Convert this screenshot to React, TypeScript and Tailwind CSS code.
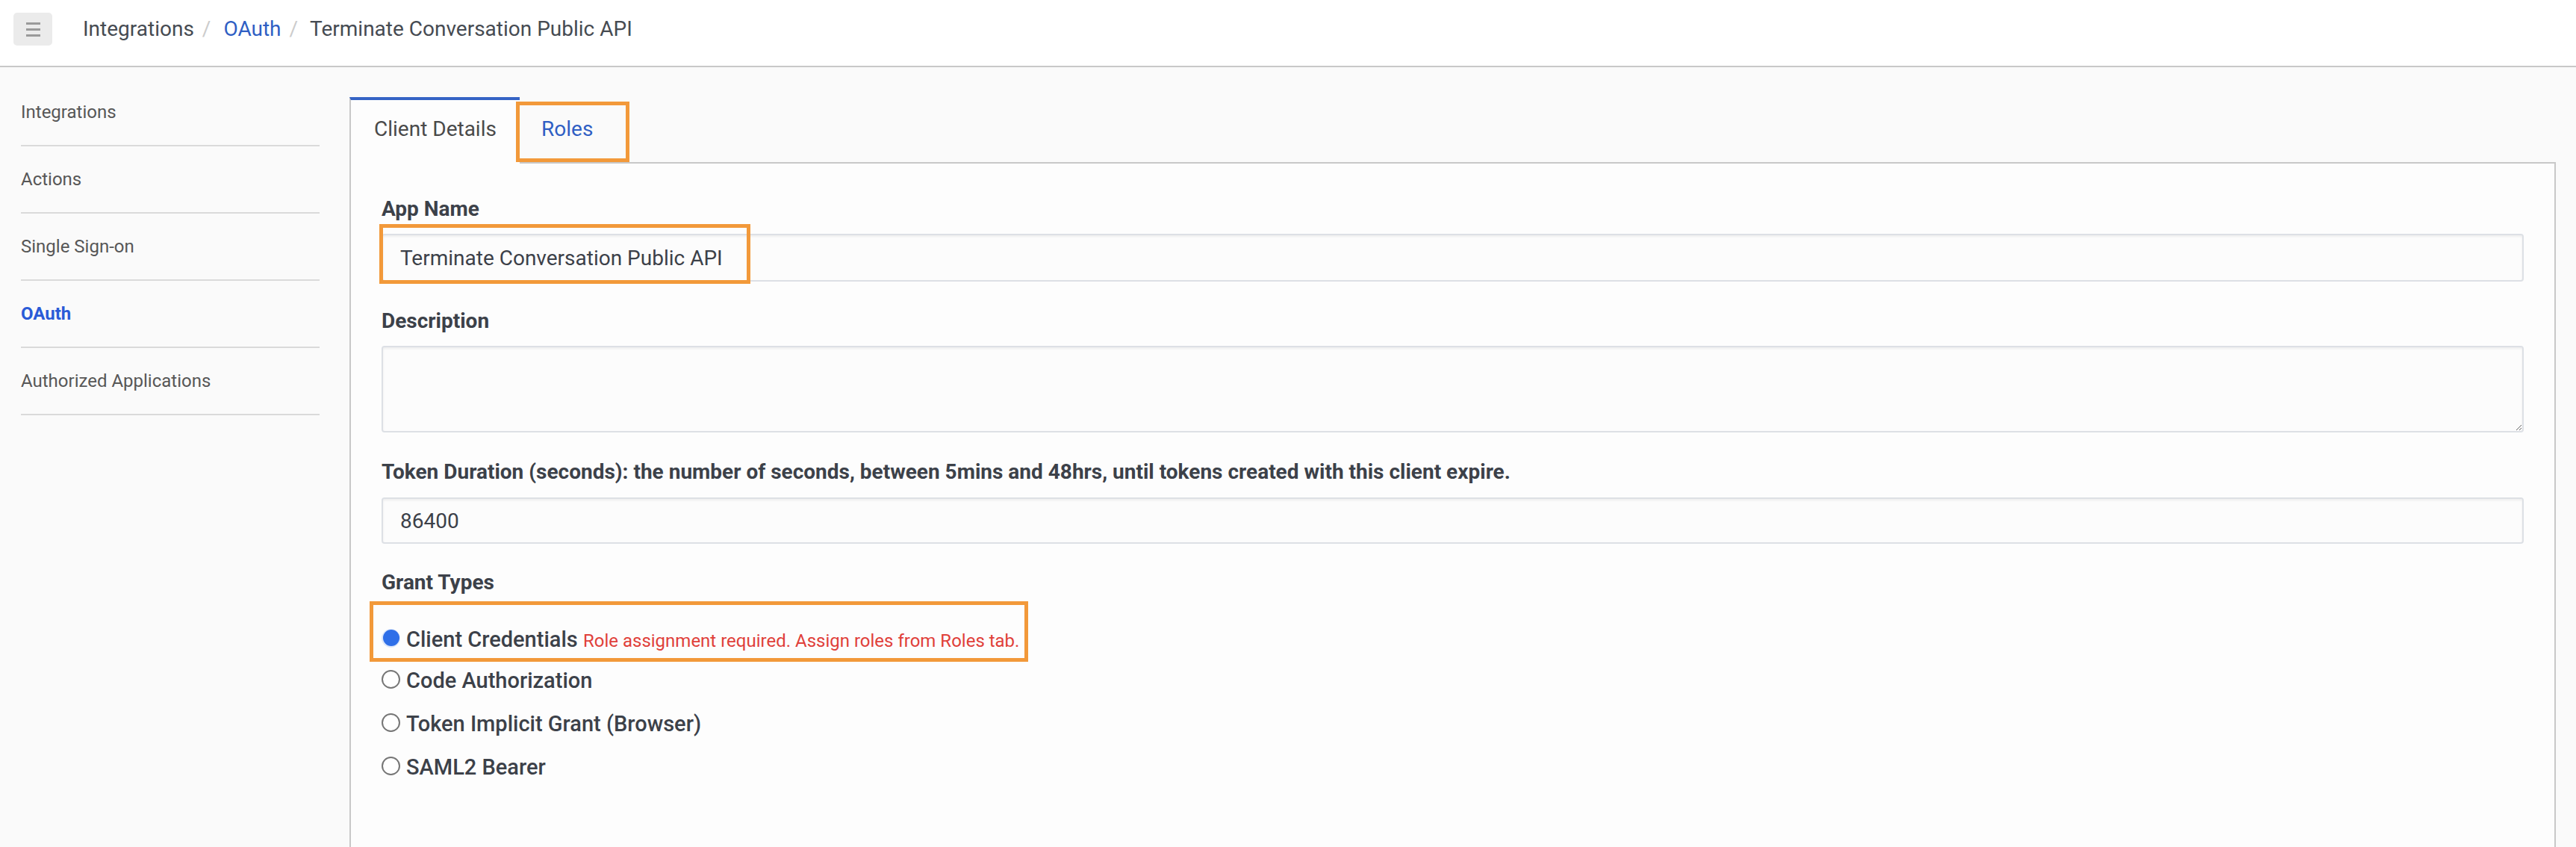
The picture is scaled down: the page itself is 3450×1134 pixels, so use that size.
const font = "font-['Roboto','Liberation_Sans',sans-serif]";

const sideItems = ["Integrations", "Actions", "Single Sign-on", "OAuth", "Authorized Applications"];

function Radio({ checked }: { checked?: boolean }) {
  if (checked) {
    return (
      <span className="mb-[6px] flex h-[25px] w-[25px] flex-none items-center justify-center rounded-full bg-[#dce7fb]">
        <span className="h-[22px] w-[22px] rounded-full bg-[#2f6fe8]" />
      </span>
    );
  }
  return <span className="mb-[6px] h-[25px] w-[25px] flex-none rounded-full border-2 border-[#767676] bg-white" />;
}

function GrantRow({ label, checked }: { label: string; checked?: boolean }) {
  return (
    <div className="flex h-[58px] items-center gap-[8px]">
      <Radio checked={checked} />
      <span className="text-[29px] font-medium text-[#3c4149]">{label}</span>
    </div>
  );
}

function Label({ children }: { children: React.ReactNode }) {
  return <div className="text-[28px] leading-[40px] font-bold text-[#3c4149]">{children}</div>;
}

export default function App() {
  return (
    <div className={`${font} flex h-[1134px] flex-col overflow-hidden bg-[#fafafa]`}>
      {/* top bar */}
      <header className="flex h-[90px] flex-none items-start border-b-2 border-[#c8c8c8] bg-white pl-[18px] pt-[17px]">
        <button className="flex h-[44px] w-[52px] flex-col items-center justify-center gap-[5px] rounded-[5px] bg-[#ebebeb]">
          <span className="h-[3px] w-[19px] bg-[#9a9a9a]" />
          <span className="h-[3px] w-[19px] bg-[#9a9a9a]" />
          <span className="h-[3px] w-[19px] bg-[#9a9a9a]" />
        </button>
        <nav className="ml-[41px] flex h-[44px] items-center text-[28px] text-[#464b52]">
          <span>Integrations</span>
          <span className="ml-[11px] mr-[17px] text-[#cccccc]">/</span>
          <span className="text-[#2f5fc4]">OAuth</span>
          <span className="ml-[11px] mr-[16px] text-[#cccccc]">/</span>
          <span>Terminate Conversation Public API</span>
        </nav>
      </header>

      <div className="flex flex-1 pr-[27px]">
        {/* sidebar */}
        <aside className="ml-[28px] mt-[16px] w-[400px] flex-none">
          {sideItems.map((item) => (
            <div
              key={item}
              className={`flex h-[90px] items-center border-b-2 border-[#dadada] text-[24px] ${
                item === "OAuth" ? "font-bold text-[#2a5bd7]" : "text-[#575757]"
              }`}
            >
              {item}
            </div>
          ))}
        </aside>

        {/* content */}
        <main className="ml-[40px] mt-[40px] flex flex-1 flex-col">
          <div className="flex items-end">
            <div className="relative z-10 -mb-[2px] h-[89px] w-[228px] border-l-2 border-t-4 border-l-[#c8c8c8] border-t-[#3563c5] bg-[#fdfdfd] pl-[31px] pt-[19px] text-[28px] leading-[40px] text-[#4a4a4a]">
              Client Details
            </div>
            <div className="relative z-20 -ml-[5px] h-[81px] w-[152px] border-[5px] border-[#f2993a] pl-[29px] pt-[12px] text-[28px] leading-[40px] text-[#2f5fc4]">
              Roles
            </div>
          </div>

          <section className="flex-1 border-x-2 border-t-2 border-[#c8c8c8] bg-[#fdfdfd] px-[41px] pt-[41px]">
            <Label>App Name</Label>
            <div className="relative mt-[13px]">
              <input
                readOnly
                value="Terminate Conversation Public API"
                className="h-[64px] w-full rounded-[4px] border-2 border-[#dde0e5] bg-[#fcfcfc] pl-[23px] text-[28px] text-[#3c4149] shadow-[inset_0_2px_3px_rgba(0,0,0,0.06)] outline-none"
              />
              <div className="pointer-events-none absolute -left-[3px] -top-[13px] h-[80px] w-[497px] border-[5px] border-[#f2993a]" />
            </div>

            <div className="mt-[33px]">
              <Label>Description</Label>
            </div>
            <textarea
              readOnly
              className="mt-[13px] block h-[116px] w-full resize-y rounded-[4px] border-2 border-[#dde0e5] bg-[#fcfcfc] shadow-[inset_0_2px_3px_rgba(0,0,0,0.06)] outline-none"
            />

            <div className="mt-[33px]">
              <Label>
                Token Duration (seconds): the number of seconds, between 5mins and 48hrs, until tokens created with this
                client expire.
              </Label>
            </div>
            <input
              readOnly
              value="86400"
              className="mt-[14px] h-[62px] w-full rounded-[4px] border-2 border-[#dde0e5] bg-[#fcfcfc] pl-[23px] text-[28px] text-[#3c4149] shadow-[inset_0_2px_3px_rgba(0,0,0,0.06)] outline-none"
            />

            <div className="mt-[32px]">
              <Label>Grant Types</Label>
            </div>

            <div className="-ml-[16px] mt-[5px] h-[81px] w-[882px] border-[5px] border-[#f2993a] pl-[11px] pt-[23px]">
              <div className="flex h-[48px] items-center gap-[8px]">
                <Radio checked />
                <span className="whitespace-nowrap text-[29px] font-medium text-[#3c4149]">
                  Client Credentials{" "}
                  <span className="text-[24px] font-normal text-[#e0403a]">
                    Role assignment required. Assign roles from Roles tab.
                  </span>
                </span>
              </div>
            </div>
            <div className="-mt-[3px]">
              <GrantRow label="Code Authorization" />
              <GrantRow label="Token Implicit Grant (Browser)" />
              <GrantRow label="SAML2 Bearer" />
            </div>
          </section>
        </main>
      </div>
    </div>
  );
}
